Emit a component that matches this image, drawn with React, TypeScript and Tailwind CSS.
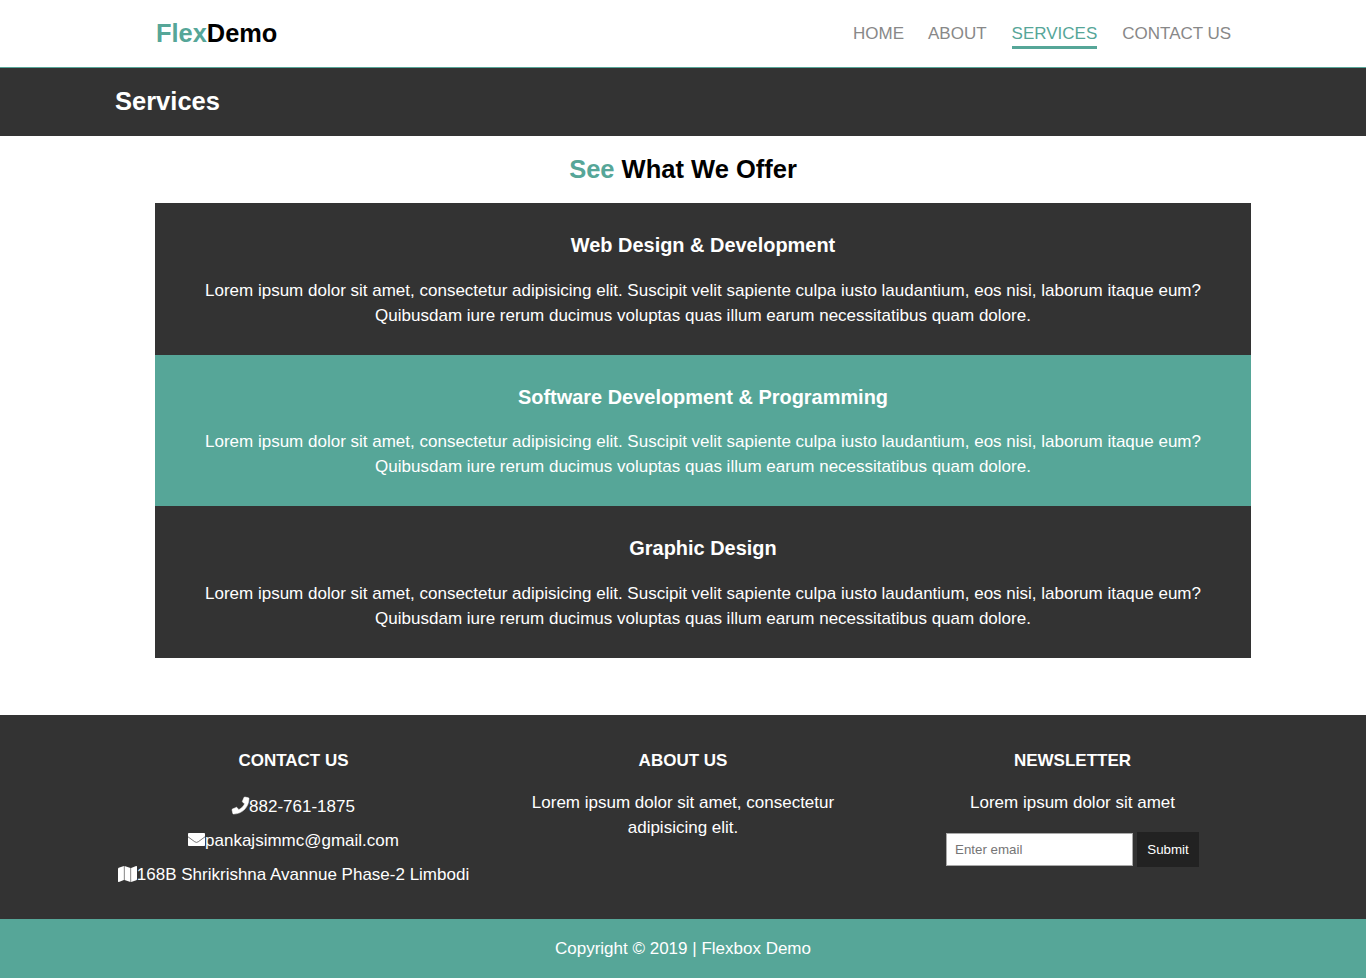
import { FaPhone } from "react-icons/fa";

const services = [
  { title: "Web Design & Development", box: "bg-[#333333] h-[152px]", gap: "mt-[18px]" },
  { title: "Software Development & Programming", box: "bg-[#56a698] h-[151px]", gap: "mt-[17px]" },
  { title: "Graphic Design", box: "bg-[#333333] h-[152px]", gap: "mt-[18px]" },
];

const links = [
  { label: "HOME", style: "border-transparent text-[#888888] ml-0" },
  { label: "ABOUT", style: "border-transparent text-[#888888] ml-[24px]" },
  { label: "SERVICES", style: "border-[#56a698] text-[#56a698] ml-[25px]" },
  { label: "CONTACT US", style: "border-transparent text-[#888888] ml-[25px]" },
];

function EnvelopeIcon() {
  return (
    <svg className="mb-[3px] h-[13px] w-[17px]" viewBox="0 0 17 13" fill="none">
      <rect width="17" height="13" rx="0.8" fill="white" />
      <path d="M0 3.8 L6.8 8.8 Q8.5 10 10.2 8.8 L17 3.8" stroke="#555555" strokeWidth="0.8" />
    </svg>
  );
}

function MapIcon() {
  return (
    <svg className="mb-[2px] h-[16px] w-[19px]" viewBox="0 0 19 16" fill="white">
      <path d="M0 2.8 Q0 2.1 .7 1.8 L5.9 0 V14 L.9 15.9 Q0 16.2 0 15.3 Z" />
      <path d="M6.5 0 L12.5 2 V16 L6.5 14 Z" />
      <path d="M13.1 2 L18.1 .1 Q19 -.2 19 .7 V13.2 Q19 13.9 18.3 14.2 L13.1 16 Z" />
    </svg>
  );
}

export default function App() {
  return (
    <div className="h-[978px] overflow-hidden bg-white font-['Liberation_Sans',Arial,sans-serif] text-[17.01px] leading-[25px] text-white">
      <header className="flex h-[68px] items-start justify-between border-b border-[#56a698] pl-[156px] pr-[134.8px]">
        <h1 className="mt-[14px] text-[25.4px] leading-[38px] font-bold text-black">
          <span className="text-[#56a698]">Flex</span>Demo
        </h1>
        <nav className="mt-[21px] flex">
          {links.map((l) => (
            <a key={l.label} href="#" className={`block h-[28px] border-b-3 whitespace-nowrap ${l.style}`}>{l.label}</a>
          ))}
        </nav>
      </header>
      <section className="h-[68px] bg-[#333333] pt-[14px] pl-[115px]">
        <h1 className="text-[25.5px] leading-[38px] font-bold">Services</h1>
      </section>
      <main className="h-[579px]">
        <h2 className="pt-[14px] text-center text-[25.5px] leading-[38px] font-bold text-black">
          <span className="text-[#56a698]">See</span> What We Offer
        </h2>
        <div className="mt-[15px] ml-[155px] w-[1096px]">
          {services.map((s) => (
            <article key={s.title} className={`px-[40px] pt-[28px] text-center ${s.box}`}>
              <h3 className="text-[19.95px] leading-[29px] font-bold">{s.title}</h3>
              <p className={s.gap}>Lorem ipsum dolor sit amet, consectetur adipisicing elit. Suscipit velit sapiente culpa iusto laudantium, eos nisi, laborum itaque eum? Quibusdam iure rerum ducimus voluptas quas illum earum necessitatibus quam dolore.</p>
            </article>
          ))}
        </div>
      </main>
      <footer>
        <div className="flex h-[204px] bg-[#333333] pt-[33px] pl-[98.5px] text-center">
          <section className="w-[390px]">
            <h4 className="font-bold">CONTACT US</h4>
            <ul className="mt-[17px] leading-[34px]">
              <li className="flex items-center justify-center"><FaPhone className="mb-[3px] size-[17px] overflow-visible" stroke="white" strokeWidth={16} />882-761-1875</li>
              <li className="flex items-center justify-center"><EnvelopeIcon />pankajsimmc@gmail.com</li>
              <li className="flex items-center justify-center"><MapIcon />168B Shrikrishna Avannue Phase-2 Limbodi</li>
            </ul>
          </section>
          <section className="w-[389px] px-[35px]">
            <h4 className="font-bold">ABOUT US</h4>
            <p className="mt-[17px]">Lorem ipsum dolor sit amet, consectetur adipisicing elit.</p>
          </section>
          <section className="w-[390px]">
            <h4 className="font-bold">NEWSLETTER</h4>
            <p className="mt-[17px]">Lorem ipsum dolor sit amet</p>
            <form className="mt-[17px] flex items-center justify-center gap-[4px] text-[13.333px] leading-[15px]" onSubmit={(e) => e.preventDefault()}>
              <input placeholder="Enter email" className="h-[33px] w-[187px] border border-[#a9a9a9] bg-white px-[8px] text-black placeholder:text-[#757575]" />
              <button className="h-[35px] w-[62px] bg-[#222222]">Submit</button>
            </form>
          </section>
        </div>
        <div className="h-[59px] bg-[#56a698] pt-[17px] text-center">Copyright © 2019 | Flexbox Demo</div>
      </footer>
    </div>
  );
}
